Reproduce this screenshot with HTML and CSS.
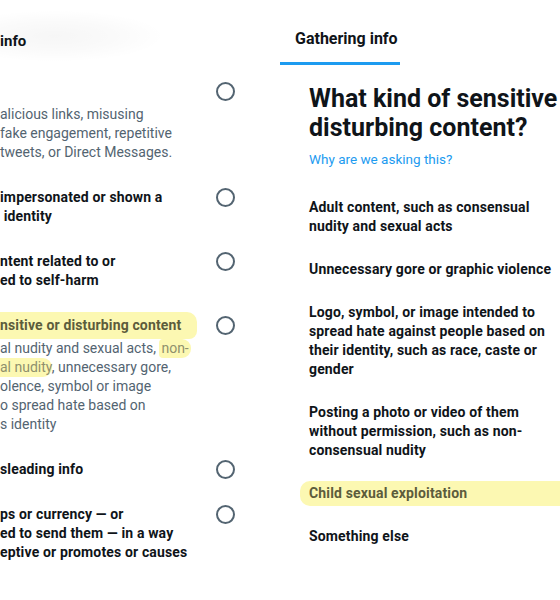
FILE: index.html
```html
<!DOCTYPE html>
<html lang="en">
<head>
<meta charset="utf-8">
<title>Report</title>
<link rel="stylesheet" href="styles.css">
</head>
<body>
<div class="page">
  <section class="left">
    <header class="left-head"><span>info</span></header>
    <ul class="reasons">
      <li class="reason">
        <div class="reason-text">
          <div class="line title">&nbsp;</div>
          <div class="desc">
            <div class="line">alicious links, misusing</div>
            <div class="line">fake engagement, repetitive</div>
            <div class="line">tweets, or Direct Messages.</div>
          </div>
        </div>
        <span class="radio"></span>
      </li>
      <li class="reason">
        <div class="reason-text">
          <div class="line title">impersonated or shown a</div>
          <div class="line title">&nbsp;identity</div>
        </div>
        <span class="radio"></span>
      </li>
      <li class="reason">
        <div class="reason-text">
          <div class="line title">ntent related to or</div>
          <div class="line title">ed to self-harm</div>
        </div>
        <span class="radio"></span>
      </li>
      <li class="reason">
        <div class="reason-text">
          <div class="line title"><mark class="hl hl-title">nsitive or disturbing content</mark></div>
          <div class="desc">
            <div class="line">al nudity and sexual acts, <mark class="hl hl-desc">non-</mark></div>
            <div class="line"><mark class="hl hl-desc hl-start">al nudity</mark>, unnecessary gore,</div>
            <div class="line">olence, symbol or image</div>
            <div class="line">o spread hate based on</div>
            <div class="line">s identity</div>
          </div>
        </div>
        <span class="radio"></span>
      </li>
      <li class="reason">
        <div class="reason-text">
          <div class="line title">sleading info</div>
        </div>
        <span class="radio"></span>
      </li>
      <li class="reason">
        <div class="reason-text">
          <div class="line title">ps or currency — or</div>
          <div class="line title">ed to send them — in a way</div>
          <div class="line title">eptive or promotes or causes</div>
        </div>
        <span class="radio"></span>
      </li>
    </ul>
  </section>

  <section class="right">
    <nav class="tabs"><span class="tab">Gathering info</span></nav>
    <div class="content">
      <h1 class="question">What kind of sensitive or disturbing content?</h1>
      <a class="why">Why are we asking this?</a>
      <ul class="options">
        <li class="option">Adult content, such as consensual nudity and sexual acts</li>
        <li class="option">Unnecessary gore or graphic violence</li>
        <li class="option">Logo, symbol, or image intended to spread hate against people based on their identity, such as race, caste or gender</li>
        <li class="option">Posting a photo or video of them without permission, such as non-consensual nudity</li>
        <li class="option option-hl"><mark class="hl hl-wide">Child sexual exploitation</mark></li>
        <li class="option">Something else</li>
      </ul>
    </div>
  </section>
</div>
</body>
</html>
```

FILE: styles.css
```css
* { box-sizing: border-box; }

html, body {
  margin: 0;
  padding: 0;
  background: #ffffff;
}

body {
  font-family: Roboto, "Liberation Sans", sans-serif;
  color: #0f1419;
  width: 560px;
  height: 600px;
  overflow: hidden;
}

.page {
  display: flex;
  height: 600px;
}

/* ---------- left panel ---------- */
.left {
  width: 280px;
  flex: none;
  overflow: hidden;
}

.left-head {
  height: 62px;
  padding-top: 31px;
  font-size: 15px;
  font-weight: 700;
  line-height: 20px;
  width: 200px;
  background: radial-gradient(ellipse 110px 26px at 55px 36px, rgba(0,0,0,0.035) 0%, rgba(0,0,0,0.02) 55%, rgba(0,0,0,0) 100%);
}

.reasons {
  list-style: none;
  margin: 0;
  padding: 20px 0 0 0;
  display: flex;
  flex-direction: column;
  gap: 26px;
}

.reason {
  display: flex;
  align-items: flex-start;
}

.reason-text {
  width: 216px;
  flex: none;
}

.line {
  font-size: 14px;
  line-height: 19px;
  white-space: nowrap;
}

.title {
  font-weight: 700;
  color: #0f1419;
  letter-spacing: 0.15px;
}

.desc {
  margin-top: 4px;
}

.desc .line {
  color: #536471;
}

.radio {
  width: 19px;
  height: 19px;
  border: 2px solid #536471;
  border-radius: 50%;
  margin-top: 0;
  flex: none;
}

/* ---------- highlights ---------- */
.hl {
  background: #fcf8b2;
  color: #5c5c3c;
}

.hl-title {
  display: inline-block;
  padding: 4px 16px 4px 0;
  margin: -4px 0;
  border-radius: 0 10px 8px 0;
}

.desc .hl-desc {
  color: #8f906d;
  padding: 1px 2px 2px 2px;
  border-radius: 4px 9px 9px 4px;
}

.desc .hl-start {
  padding: 1px 0 2px 0;
  border-radius: 0 9px 9px 0;
}

/* ---------- right panel ---------- */
.right {
  flex: 1;
  overflow: hidden;
  min-width: 0;
}

.tabs {
  display: flex;
  height: 65px;
}

.tab {
  display: block;
  width: 120px;
  padding: 29px 0 0 15px;
  font-size: 16px;
  font-weight: 700;
  line-height: 20px;
  border-bottom: 3px solid #1d9bf0;
  height: 65px;
  white-space: nowrap;
}

.content {
  padding: 19px 0 0 29px;
}

.question {
  margin: 0;
  font-size: 25px;
  line-height: 29px;
  font-weight: 700;
  width: 300px;
  white-space: normal;
}

.why {
  display: block;
  margin-top: 8px;
  font-size: 13.5px;
  line-height: 18px;
  color: #1d9bf0;
}

.options {
  list-style: none;
  margin: 0;
  padding: 30px 0 0 0;
  display: flex;
  flex-direction: column;
  gap: 24px;
}

.option {
  font-size: 14px;
  line-height: 19px;
  font-weight: 700;
  letter-spacing: 0.15px;
  width: 250px;
}

.option-hl {
  width: auto;
}

.hl-wide {
  display: block;
  margin: -3px 0 -3px -9px;
  padding: 3px 0 3px 9px;
  border-radius: 10px 0 0 10px;
  width: 300px;
}
```
